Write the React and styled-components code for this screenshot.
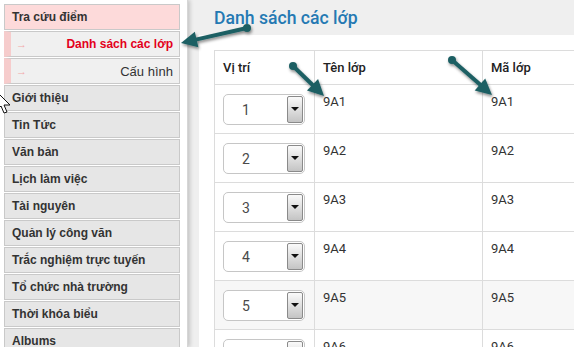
import styled, { createGlobalStyle } from "styled-components";

const Global = createGlobalStyle`
  html, body {
    margin: 0;
    padding: 0;
    background: #efefef;
    overflow: hidden;
  }
`;

const Page = styled.div`
  position: relative;
  display: flex;
  width: 574px;
  height: 347px;
  overflow: hidden;
`;

const Sidebar = styled.aside`
  width: 188px;
  flex-shrink: 0;
  background: #fff;
  padding: 4px 0 0 4px;
  box-sizing: border-box;
  border-right: 1px solid #d6d6d6;
  box-shadow: 2px 0 4px rgba(0, 0, 0, 0.18);
  z-index: 1;
`;

const Menu = styled.ul`
  list-style: none;
  margin: 0;
  padding: 0;
  width: 176px;
`;

const Item = styled.li`
  display: flex;
  align-items: center;
  height: 26px;
  box-sizing: border-box;
  margin-bottom: 1px;
  padding-left: 7px;
  border: 1px solid #c9c9c9;
  background: ${(p) => (p.open ? "#fddada" : "#e6e6e6")};
  font: bold 12px "Liberation Sans", Arial, sans-serif;
  color: #333;
`;

const SubItem = styled.li`
  display: flex;
  align-items: center;
  height: 26px;
  box-sizing: border-box;
  margin-bottom: 1px;
  border: 1px solid #c9c9c9;
  border-left: 7px solid #f6cccc;
  background: #f0f0f0;
  padding: 0 6px 0 5px;
  font: ${(p) => (p.active ? "bold 12px" : "13px")} "Liberation Sans", Arial, sans-serif;
  color: ${(p) => (p.active ? "#e3001b" : "#333")};
`;

const SubArrow = styled.span`
  color: #f2a9a9;
  font-size: 11px;
  margin-right: auto;
`;

const Main = styled.main`
  flex: 1;
  display: flex;
  flex-direction: column;
  min-width: 0;
  padding-left: 4px;
`;

const Title = styled.h1`
  margin: 0;
  height: 35px;
  display: flex;
  align-items: center;
  padding-left: 22px;
  font: 500 17.6px Roboto, "Liberation Sans", sans-serif;
  color: #2479b3;
`;

const Panel = styled.section`
  flex: 1;
  margin-left: 7px;
  background: #fff;
  padding: 15px 0 0 15px;
  overflow: hidden;
`;

const Table = styled.table`
  border-collapse: collapse;
  width: 430px;
  border: 1px solid #dcdcdc;
  font: 13px Roboto, "Liberation Sans", sans-serif;
  color: #333;
`;

const Th = styled.th`
  text-align: left;
  font-weight: 500;
  color: #222;
  height: 33px;
  padding: 0 8px;
  border: 1px solid #dcdcdc;
  width: ${(p) => p.w || "auto"};
`;

const Tr = styled.tr`
  background: ${(p) => (p.shade ? "#f7f7f7" : "#fff")};
`;

const Td = styled.td`
  vertical-align: top;
  height: 49px;
  box-sizing: border-box;
  padding: 8px 8px 0;
  border: 1px solid #dcdcdc;
  line-height: 18px;
`;

const Select = styled.div`
  display: flex;
  width: 82px;
  height: 31px;
  box-sizing: border-box;
  border: 1px solid #c6c6c6;
  border-radius: 5px;
  background: #fff;
  margin-top: 1px;
`;

const SelectValue = styled.span`
  flex: 1;
  padding-left: 18px;
  display: flex;
  align-items: center;
  font: 14px Roboto, "Liberation Sans", sans-serif;
  color: #4a4a4a;
`;

const SelectButton = styled.span`
  width: 16px;
  margin: 1px 1px 1px 0;
  box-sizing: border-box;
  border: 1px solid #8a8a8a;
  border-radius: 2px;
  background: linear-gradient(#fafafa, #c4c4c4);
  display: flex;
  justify-content: center;
  padding-top: 10px;

  &::after {
    content: "";
    width: 0;
    height: 0;
    border-left: 4px solid transparent;
    border-right: 4px solid transparent;
    border-top: 4px solid #111;
  }
`;

const Overlay = styled.svg`
  position: absolute;
  left: 0;
  top: 0;
  pointer-events: none;
  z-index: 5;
`;

const arrows = [
  { x1: 247, y1: 28, x2: 181, y2: 43 },
  { x1: 293, y1: 66, x2: 324, y2: 96 },
  { x1: 452, y1: 60, x2: 492, y2: 95 },
];

function Arrow({ x1, y1, x2, y2 }) {
  const dx = x2 - x1;
  const dy = y2 - y1;
  const len = Math.hypot(dx, dy);
  const ux = dx / len;
  const uy = dy / len;
  const bx = x2 - ux * 16;
  const by = y2 - uy * 16;
  const px = -uy * 8;
  const py = ux * 8;
  return (
    <g filter="url(#shadow)">
      <line x1={x1} y1={y1} x2={bx + ux * 2} y2={by + uy * 2} stroke="#1d5f63" strokeWidth="4" />
      <circle cx={x1} cy={y1} r="4" fill="#1d5f63" />
      <polygon points={`${x2},${y2} ${bx + px},${by + py} ${bx - px},${by - py}`} fill="#1d5f63" />
    </g>
  );
}

const rows = [1, 2, 3, 4, 5, 6];
const menu = [
  "Giới thiệu",
  "Tin Tức",
  "Văn bản",
  "Lịch làm việc",
  "Tài nguyên",
  "Quản lý công văn",
  "Trắc nghiệm trực tuyến",
  "Tổ chức nhà trường",
  "Thời khóa biểu",
  "Albums",
];

export default function App() {
  return (
    <Page>
      <Global />
      <Sidebar>
        <Menu>
          <Item open>Tra cứu điểm</Item>
          <SubItem active>
            <SubArrow>→</SubArrow>Danh sách các lớp
          </SubItem>
          <SubItem>
            <SubArrow>→</SubArrow>Cấu hình
          </SubItem>
          {menu.map((m) => (
            <Item key={m}>{m}</Item>
          ))}
        </Menu>
      </Sidebar>
      <Main>
        <Title>Danh sách các lớp</Title>
        <Panel>
          <Table>
            <thead>
              <tr>
                <Th w="83px">Vị trí</Th>
                <Th w="151px">Tên lớp</Th>
                <Th>Mã lớp</Th>
              </tr>
            </thead>
            <tbody>
              {rows.map((n) => (
                <Tr key={n} shade={n === 5}>
                  <Td>
                    <Select>
                      <SelectValue>{n}</SelectValue>
                      <SelectButton />
                    </Select>
                  </Td>
                  <Td>9A{n}</Td>
                  <Td>9A{n}</Td>
                </Tr>
              ))}
            </tbody>
          </Table>
        </Panel>
      </Main>
      <Overlay width="574" height="347">
        <defs>
          <filter id="shadow" x="-20%" y="-20%" width="140%" height="140%">
            <feDropShadow dx="1" dy="2" stdDeviation="1.5" floodColor="#000" floodOpacity="0.45" />
          </filter>
        </defs>
        {arrows.map((a, i) => (
          <Arrow key={i} {...a} />
        ))}
        <path d="M-3 92 L-3 110 L1 106 L4 113 L7 112 L4 105 L10 105 Z" fill="#fff" stroke="#111" strokeWidth="1" />
      </Overlay>
    </Page>
  );
}
